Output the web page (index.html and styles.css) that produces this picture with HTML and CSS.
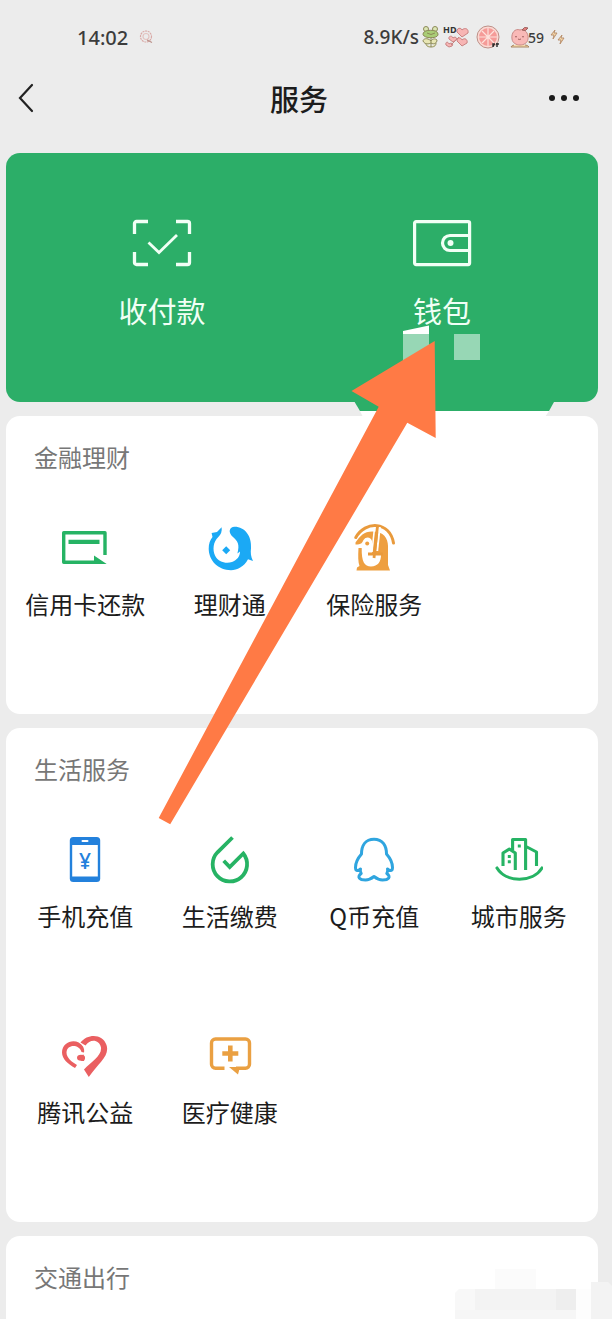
FILE: index.html
```html
<!DOCTYPE html>
<html lang="zh-CN">
<head>
<meta charset="utf-8">
<meta name="viewport" content="width=device-width, initial-scale=1">
<title>服务</title>
<link rel="stylesheet" href="styles.css">
</head>
<body>
<div class="page">
  <div class="status">
    <div class="status-left">
      <span class="clock">14:02</span>
      <svg class="badge" width="16" height="16" viewBox="0 0 16 16" fill="none" stroke="#d9a9a6" stroke-width="1.2"><circle cx="8" cy="7.500" r="5.500" stroke-dasharray="2 .7"/><circle cx="8" cy="7.500" r="3" stroke="#e3c3c0"/><path d="M9 11l5 2.500" stroke="#b98f88"/></svg>
    </div>
    <div class="status-right">
      <span class="speed">8.9K/s</span>
      <svg width="20" height="24" viewBox="0 0 20 24" stroke="#8c8a58" stroke-width="1"><circle cx="5" cy="4" r="2.500" fill="#dce6b5"/><circle cx="14" cy="4" r="2.500" fill="#dce6b5"/><path d="M2 9C2 4 17 4 17 9c1 5-15 5-15 0z" fill="#a9cd76"/><path d="M6 8q4 3 8 0" fill="none"/><path d="M10 12v10M10 16C6 12 2 14 2 16c2 4 6 3 8 2 3 2 6 0 6-3-2-2-5-1-6 1zM10 22c-4 0-5-2-5-3M10 22c4 0 5-2 5-4" fill="#e8e6b4"/></svg>
      <svg width="27" height="32" viewBox="0 -4 27 32" stroke="#c98383" stroke-width="1"><path d="M19 12l-5-5c-1-4 4-5 5-2 3-3 7-1 6 3zM19 21l-5-5c0-4 4-4 5-1 3-3 6 0 5 3zM10 17l-4-3c-1-3 3-4 4-1 2-2 5 0 3 2zM6 22l-3-2c-1-3 2-4 3-1 2-2 5 0 3 2z" fill="#f7b5b4"/><path d="M8 20l8-8" fill="none"/><text class="hd" x="0" y="8">HD</text></svg>
      <svg class="fruit" width="24" height="24" viewBox="0 0 24 24"><circle cx="12" cy="12" r="11" fill="#fbd9d3" stroke="#bd9088"/><circle cx="12" cy="12" r="9" fill="#f59b98"/><path d="M12 3v18M3 12h18M6 6l12 12M18 6L6 18" stroke="#fde2dc" stroke-width="1.200"/><path d="M17 22v-3h2M21 22v-4M20 19h3" stroke="#333" stroke-width="1.500"/></svg>
      <svg width="20" height="24" viewBox="0 0 20 24"><path d="M4 20q-3 1-3 2h18q-1-2-4-2" fill="#f6dbab" stroke="#a98562"/><path d="M10 5C5 3 1 8 2 14c1 8 15 8 16 0 1-6-4-11-8-9z" fill="#f9b9b7" stroke="#c98b88"/><path d="M12 5q2-4 6-2-2 4-6 2" fill="#e77f7f" stroke="#99625c"/><path d="M5 12q1-1 2 0M12 12q1-1 2 0M8 14q1 1 3 0" fill="none" stroke="#a1625f"/></svg>
      <span class="battery">59</span>
      <svg class="bolts" width="16" height="16" viewBox="0 0 16 16" fill="#f5d7a9" stroke="#b58b68" stroke-width=".9"><path d="M5 1L1 6h3L3 10l4-6H4zM12 6L8 11h3l-1 4 4-6h-3z"/></svg>
    </div>
  </div>

  <header class="nav">
    <button class="nav-btn" type="button" aria-label="返回"><svg width="16" height="30" viewBox="0 0 16 30" fill="none" stroke="#222" stroke-width="2.200" stroke-linecap="round"><path d="M14 2L2 15l12 13"/></svg></button>
    <h1 class="nav-title">服务</h1>
    <button class="nav-btn nav-more" type="button" aria-label="更多"><svg width="32" height="8" viewBox="0 0 32 8" fill="#1a1a1a"><circle cx="4" cy="4" r="3"/><circle cx="16" cy="4" r="3"/><circle cx="28" cy="4" r="3"/></svg></button>
  </header>

  <main class="cards">
    <section class="card pay">
      <a class="pay-item" href="#pay">
        <svg width="60" height="48" viewBox="0 0 60 48" fill="none" stroke="#f1fff5" stroke-width="3.300"><path d="M16 2.500H4.500a2 2 0 0 0-2 2V15M44 2.500h11.500a2 2 0 0 1 2 2V15M16 45.500H4.500a2 2 0 0 1-2-2V33M44 45.500h11.500a2 2 0 0 0 2-2V33"/><path d="M16.500 23.500l10.500 10 18-17.500" stroke-width="2.800"/></svg>
        <span>收付款</span>
      </a>
      <a class="pay-item" href="#wallet">
        <svg width="60" height="48" viewBox="0 0 60 48" fill="none" stroke="#f1fff5" stroke-width="3.200"><rect x="2.600" y="2.600" width="55" height="43" rx="1.500"/><path d="M57 16.500H38a7.500 7.500 0 0 0 0 15h19"/><circle cx="38.500" cy="24" r="3" fill="#f1fff5" stroke="none"/></svg>
        <span>钱包</span>
      </a>
    </section>

    <section class="card group">
      <h2 class="group-title">金融理财</h2>
      <div class="grid">
        <a class="item" href="#credit">
          <svg width="48" height="48" viewBox="0 0 48 48"><path d="M44 31V8.700H2.700v29.600H40" fill="none" stroke="#26b364" stroke-width="3.400" stroke-linejoin="round"/><path d="M7.500 15.800h31V20h-31zM33 31.500l12.700 8.500H33z" fill="#26b364"/></svg>
          <span>信用卡还款</span>
        </a>
        <a class="item" href="#licaitong">
          <svg width="48" height="48" viewBox="0 0 48 48" fill="#1ba9f5"><path d="M5.600 9L11 8l4.600-4.700Q16.500 9 12.300 13C7 18 6.500 26 9 31.500c3 6.500 11 8.500 17 6.500 5-2 8-5.500 8-10.500L31.400 29.500C34 20 31.500 17 27 13 21.500 8 23.500 3 28.500 2.700 38.500 2.500 46 12 45 24c-.5 5-.2 8.500 2 13l-5-1.700C38 43 31 46.200 25 46.200 12 46.200 3 36.500 2.700 25c-.1-5 1.300-9 3.800-12z"/><path d="M20.200 22.300l4 4-4 4-4-4z"/></svg>
          <span>理财通</span>
        </a>
        <a class="item" href="#insurance">
          <svg width="48" height="48" viewBox="0 0 48 48"><path d="M5.800 13.500C15-3.500 40-3 43.500 19" fill="none" stroke="#e99a3c" stroke-width="3" stroke-linecap="round"/><path d="M5.500 18.500C10 12 14 7.500 22 7.500c11-.5 16 6.500 16 14.500v19l2 5.500H6.500L7 43.500l2.500-1.500C8 38 8 32 8.500 24h3.200C11.500 38 14.500 42.500 21 42.500c7 0 10-5 10-11.500h-9V17c-1-4-6-5-8.500-1-1.500 3-2 4.500-8 4.500z" fill="#ee9f40"/><path d="M29.800 3l-2.600 24" stroke="#fff" stroke-width="2"/><path d="M24.600 3L22 28" stroke="#fff" stroke-width="1.600"/><path d="M27.500 2L24 34M18 30h15" fill="none" stroke="#e99a3c" stroke-width="2.800"/><circle cx="17.200" cy="19.500" r="2" fill="#ee9f40"/></svg>
          <span>保险服务</span>
        </a>
      </div>
    </section>

    <section class="card group">
      <h2 class="group-title">生活服务</h2>
      <div class="grid">
        <a class="item" href="#topup">
          <svg width="48" height="48" viewBox="0 0 48 48"><rect x="8.800" y="1" width="30.400" height="45" rx="3.500" fill="#2381dc"/><path d="M11.200 9h25.600v31.500H11.200z" fill="#fff"/><path d="M21.500 5h5" stroke="#fff" stroke-width="2" stroke-linecap="round"/><text class="yen" x="24" y="33" text-anchor="middle">¥</text></svg>
          <span>手机充值</span>
        </a>
        <a class="item" href="#bills">
          <svg width="48" height="48" viewBox="0 0 48 48" fill="none" stroke="#26b364" stroke-width="3.800"><path d="M26.500 1.500L11.500 16.300A17.200 17.200 0 1 0 37.300 17.500L23.700 31l-6-6.200" stroke-linejoin="miter"/></svg>
          <span>生活缴费</span>
        </a>
        <a class="item" href="#qcoin">
          <svg width="48" height="48" viewBox="0 0 48 48" fill="none" stroke="#2fa5df" stroke-width="3" stroke-linejoin="round" stroke-linecap="round"><path d="M24 3.200C15.500 3.200 11.500 9.500 11.500 18 7.500 22.500 5.500 27 5.500 31.500c0 4 2.500 3.500 5 1.500-.5 1.500-.2 3 .7 4.500C6.500 41 9.500 44 15.500 44c4 0 6-1.500 8.500-3.500 2.500 2 4.500 3.500 8.500 3.500 6 0 9-3 4.300-6.500.9-1.500 1.200-3 .7-4.500 2.500 2 5 2.500 5-1.500 0-4.500-2-9-6-13.500 0-8.500-4-14.800-12.500-14.800z"/></svg>
          <span>Q币充值</span>
        </a>
        <a class="item" href="#city">
          <svg width="48" height="48" viewBox="0 0 48 48" fill="none" stroke="#26b364" stroke-width="3.100"><path d="M2 32c9 15 36 15 45 0" stroke-linecap="round"/><path d="M8 30V17l6.300-4 6 4v17M17.600 14V3.500h13V34M31 10.500l10.500 5.500v14" stroke-linejoin="round"/><path d="M12.800 20.500h3M12.800 25.700h3M22.800 10h3" stroke-width="3"/></svg>
          <span>城市服务</span>
        </a>
        <a class="item" href="#charity">
          <svg width="48" height="48" viewBox="0 0 48 48" fill="#ea5f61"><path d="M14 36C7 32 1 27 1 20.500 1 9 16 5 22 14.500c1 2 1.500 4 1 6l-2.500-.5C18 12 6 12 5.500 20.500 5.500 26 11 30 16 33z"/><path d="M19.500 10.500C27 1 42 2 45.500 13c3.500 11-8 18-17.700 32L23 37.500C30 30 41 24 40 15.500 38 7 29 7 24.500 13.500z"/><ellipse cx="20" cy="25.800" rx="4" ry="3"/><path d="M22 22l2 4-1 3h-3z"/></svg>
          <span>腾讯公益</span>
        </a>
        <a class="item" href="#health">
          <svg width="48" height="48" viewBox="0 0 48 48" fill="none" stroke="#eaa042" stroke-width="3.400"><path d="M18.500 36.300H9.500a4 4 0 0 1-4-4V11a4 4 0 0 1 4-4h30a4 4 0 0 1 4 4v21.300a4 4 0 0 1-4 4H30"/><path d="M24.300 13.500v16M16.300 21.500h16" stroke-width="4.600"/><path d="M23 35h11l-2 7.500z" fill="#eaa042" stroke="none"/></svg>
          <span>医疗健康</span>
        </a>
      </div>
    </section>

    <section class="card group last">
      <h2 class="group-title">交通出行</h2>
    </section>
  </main>

  <svg class="pointer" width="396" height="500" viewBox="158 325 396 500" aria-hidden="true">
    <path d="M354 401h200.500l-5.500 10H360z" fill="#2cae68"/>
    <path d="M360 411h189l-4 6H363z" fill="#fff"/>
    <path d="M403 331l26-5.500V334h-26z" fill="#fff"/>
    <path d="M403 334h26v26h-26zM454 334h26v26h-26z" fill="#97d7b5"/>
    <path d="M434.700 341L351.500 391l27.200 15.700L158.700 818l11.500 6.300L407.300 422.700l28.400 15.300z" fill="#ff7a45"/>
  </svg>
  <svg class="mosaic" width="157" height="50" viewBox="455 1269 157 50" aria-hidden="true">
    <path d="M495 1269h41v20h-41z" fill="#fbfbfb"/>
    <path d="M576 1289h15v30h-15z" fill="#fdfdfd"/>
    <path d="M459 1289h16v21h-20v-17z" fill="#f8f8f8"/>
    <path d="M475 1289h81v21h-81z" fill="#f3f3f3"/>
    <path d="M556 1289h20v21h-20z" fill="#eee"/>
    <path d="M455 1310h121v9H455z" fill="#f6f6f6"/>
    <path d="M591 1282h17l4 4v33h-21z" fill="#f3f3f3"/>
  </svg>
</div>
</body>
</html>
```
FILE: styles.css
```css
* { box-sizing: border-box; }

body {
  margin: 0;
  background: #ececec;
  color: #1c1c1c;
  font-family: "Noto Sans CJK SC", "Noto Sans", sans-serif;
}

h1, h2 { margin: 0; font-weight: 400; }
a { color: inherit; text-decoration: none; }
svg { display: block; flex: none; }

.page {
  position: relative;
  display: flex;
  flex-direction: column;
  min-height: 100vh;
  overflow: hidden;
}

.status {
  display: flex;
  align-items: center;
  justify-content: space-between;
  height: 74px;
  padding: 0 46px 0 77px;
  color: #3c3c3c;
  font-family: "Noto Sans", sans-serif;
  font-weight: 500;
}
.status-left, .status-right { display: flex; align-items: center; }
.status-left { gap: 10px; }
.status-right { gap: 2px; }
.clock { font-size: 20px; }
.speed { font-size: 19px; }
.fruit { margin: 0 8px 0 4px; }
.battery { margin-left: -4px; font-size: 14px; }
.bolts { margin-left: 4px; }
.hd {
  fill: #333;
  stroke: none;
  font-size: 9px;
  font-weight: 700;
}

.nav {
  display: flex;
  align-items: center;
  justify-content: space-between;
  height: 48px;
  padding: 0 32px 0 18px;
}
.nav-btn {
  display: flex;
  align-items: center;
  width: 36px;
  height: 48px;
  padding: 0;
  border: 0;
  background: none;
}
.nav-more { justify-content: flex-end; }
.nav-title { font-size: 29px; font-weight: 500; line-height: 36px; }

.cards {
  display: flex;
  flex: 1;
  flex-direction: column;
  gap: 14px;
  padding: 31px 14px 0 6px;
}
.card { border-radius: 14px; background: #fff; }

.pay {
  display: grid;
  grid-template-columns: repeat(2, 1fr);
  padding: 66px 16px 74px;
  background: #2cae68;
  color: #f1fff5;
}
.pay-item {
  display: flex;
  flex-direction: column;
  align-items: center;
  gap: 25px;
  font-size: 29px;
  line-height: 36px;
}

.group { padding: 27px 7px 96px; }
.group-title {
  padding-left: 21px;
  color: #777;
  font-size: 24px;
  line-height: 28px;
}
.grid {
  display: grid;
  grid-template-columns: repeat(4, 1fr);
  row-gap: 102px;
  margin-top: 53px;
}
.item {
  display: flex;
  flex-direction: column;
  align-items: center;
  gap: 18px;
  font-size: 24px;
  line-height: 28px;
  white-space: nowrap;
}
.yen {
  fill: #2381dc;
  font-family: "Noto Sans", sans-serif;
  font-size: 21px;
  font-weight: 500;
}
.last {
  flex: 1;
  padding-bottom: 0;
  border-radius: 14px 14px 0 0;
}

.pointer {
  position: absolute;
  top: 325px;
  left: 158px;
  pointer-events: none;
}
.mosaic {
  position: absolute;
  right: 0;
  bottom: 0;
  pointer-events: none;
}
```
